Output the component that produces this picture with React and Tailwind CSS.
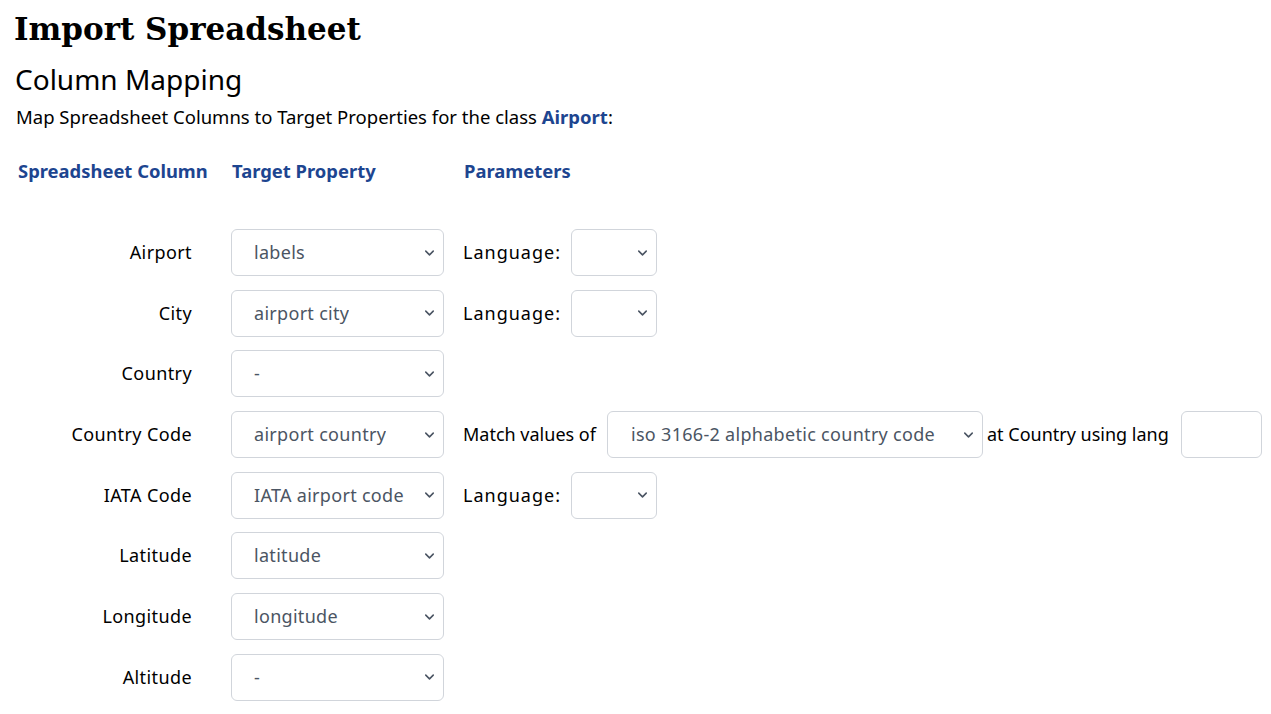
import { ChevronDown } from 'lucide-react';

const rows = [
  { label: 'Airport', value: 'labels', param: 'lang' },
  { label: 'City', value: 'airport city', param: 'lang' },
  { label: 'Country', value: '-' },
  { label: 'Country Code', value: 'airport country', param: 'match' },
  { label: 'IATA Code', value: 'IATA airport code', param: 'lang' },
  { label: 'Latitude', value: 'latitude' },
  { label: 'Longitude', value: 'longitude' },
  { label: 'Altitude', value: '-' },
];

const FakeSelect = ({ value, className }) => (
  <div
    className={`relative h-[47px] shrink-0 flex items-center rounded-md border border-[#d1d5db] bg-white pl-[22px] pr-8 text-[18px] text-[#4b5563] tracking-[0.3px] ${className}`}
  >
    <span className="truncate">{value}</span>
    <ChevronDown className="absolute right-[6px] top-1/2 -translate-y-1/2 w-[15px] h-[15px] text-[#4b5563]" strokeWidth={2.5} />
  </div>
);

const App = () => {
  const sans = { fontFamily: '"Noto Sans", sans-serif' };
  return (
    <div className="bg-white min-h-[714px] text-black" style={sans}>
      <div className="px-[14px] pt-[7px]">
        <h1 className="text-[31px] font-bold leading-[44px]" style={{ fontFamily: '"DejaVu Serif", serif' }}>
          Import Spreadsheet
        </h1>
        <h2 className="text-[28px] leading-[36px] mt-[10px] ml-[1px]">Column Mapping</h2>
        <p className="text-[18.5px] leading-[24px] mt-[8px] ml-[2px]">
          Map Spreadsheet Columns to Target Properties for the class{' '}
          <span className="font-bold text-[#1d4590]">Airport</span>:
        </p>
      </div>

      <div className="pl-[18px] mt-[30px]">
        <div className="flex text-[18.4px] font-bold text-[#1d4590] leading-[24px]">
          <div className="w-[214px]">Spreadsheet Column</div>
          <div className="w-[232px]">Target Property</div>
          <div>Parameters</div>
        </div>

        <div className="mt-[46px] flex flex-col gap-[13.7px]">
          {rows.map((r) => (
            <div key={r.label} className="flex items-center text-[18px] tracking-[0.4px] whitespace-nowrap">
              <div className="w-[174px] text-right">{r.label}</div>
              <FakeSelect value={r.value} className="ml-[39px] w-[213px]" />
              {r.param === 'lang' && (
                <div className="flex items-center ml-[19px]">
                  <span className="w-[98px] tracking-[1px]">Language:</span>
                  <FakeSelect value="" className="ml-[10px] w-[86px]" />
                </div>
              )}
              {r.param === 'match' && (
                <div className="flex items-center ml-[19px] tracking-normal">
                  <span className="w-[140px]">Match values of</span>
                  <FakeSelect value="iso 3166-2 alphabetic country code" className="ml-[4px] w-[376px] !pl-[23px]" />
                  <span className="ml-[4px] w-[190px]">at Country using lang</span>
                  <div className="ml-[4px] h-[47px] w-[81px] shrink-0 rounded-md border border-[#d1d5db] bg-white" />
                </div>
              )}
            </div>
          ))}
        </div>
      </div>
    </div>
  );
};

export default App;
